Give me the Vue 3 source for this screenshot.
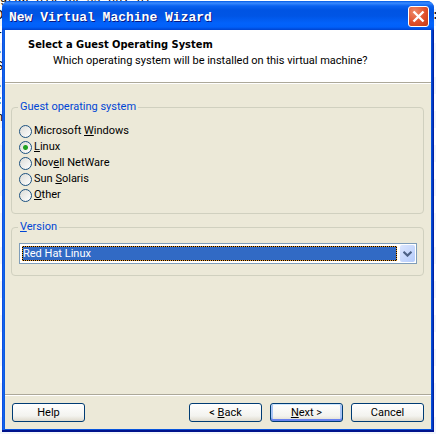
<template>
  <div class="desktop">
    <div class="backdrop" aria-hidden="true">
      <span class="behind-top">grap nix ok ss nn. nl</span>
      <span v-for="(row, i) in behindRows" :key="i" class="behind-row">
        <span>{{ row.left }}</span><span>{{ row.right }}</span>
      </span>
    </div>

    <form class="window" @submit.prevent>
      <header class="titlebar">
        <h1 class="title">New Virtual Machine Wizard</h1>
        <button type="button" class="close" aria-label="Close">
          <svg viewBox="0 0 19 19" width="19" height="19">
            <path d="M4.5 4.5 L14.5 14.5 M14.5 4.5 L4.5 14.5" stroke="#fff" stroke-width="2.4" />
          </svg>
        </button>
      </header>

      <div class="client">
        <div class="banner">
          <h2>Select a Guest Operating System</h2>
          <p>Which operating system will be installed on this virtual machine?</p>
        </div>

        <div class="page">
          <fieldset class="group systems">
            <legend>Guest operating system</legend>
            <label v-for="os in systems" :key="os.value" class="option">
              <input v-model="guest" type="radio" name="guest" :value="os.value" />
              <span>{{ os.before }}<u>{{ os.key }}</u>{{ os.after }}</span>
            </label>
          </fieldset>

          <fieldset class="group">
            <legend><label for="version"><u>V</u>ersion</label></legend>
            <div class="combo">
              <select id="version" v-model="version">
                <option>Red Hat Linux</option>
                <option>Ubuntu</option>
                <option>Other Linux</option>
              </select>
              <span class="arrow">
                <svg viewBox="0 0 9 6" width="9" height="6">
                  <path d="M0.5 0.8 L4.5 4.6 L8.5 0.8" fill="none" stroke="#4d6185" stroke-width="2.2" />
                </svg>
              </span>
            </div>
          </fieldset>
        </div>

        <footer class="actions">
          <button type="button" class="btn help">Help</button>
          <button type="button" class="btn">&lt; <u>B</u>ack</button>
          <button type="submit" class="btn default"><u>N</u>ext &gt;</button>
          <button type="button" class="btn">Cancel</button>
        </footer>
      </div>
    </form>
  </div>
</template>

<script setup>
import { ref } from 'vue';

const systems = [
  { value: 'windows', before: 'Microsoft ', key: 'W', after: 'indows' },
  { value: 'linux', before: '', key: 'L', after: 'inux' },
  { value: 'netware', before: 'Nov', key: 'e', after: 'll NetWare' },
  { value: 'solaris', before: 'Sun ', key: 'S', after: 'olaris' },
  { value: 'other', before: '', key: 'O', after: 'ther' }
];

const behindRows = [
  { left: 'D', right: ':' },
  { left: '-' },
  { left: '.' },
  { left: 'S' },
  { left: '.' },
  { left: ':' },
  { left: 'n' }
];

const guest = ref('linux');
const version = ref('Red Hat Linux');
</script>

<style>
body {
  margin: 0;
  background: #fff;
}
</style>

<style scoped>
.desktop {
  position: relative;
  box-sizing: border-box;
  height: 100vh;
  padding: 1px 2px 2px;
  overflow: hidden;
  font-family: Roboto, Tahoma, "Liberation Sans", sans-serif;
  font-size: 11px;
  line-height: 14px;
  color: #000;
}

.backdrop {
  position: absolute;
  inset: 0;
  overflow: hidden;
  background: repeating-linear-gradient(180deg, #fff 0, #fff 9px, #f3f6fb 9px, #f3f6fb 26px, #fff 26px, #fff 34px);
  font-family: "Liberation Mono", monospace;
  font-size: 12px;
  line-height: 17px;
}

.behind-top {
  display: block;
  margin-top: -9px;
  white-space: nowrap;
}

.behind-row {
  display: flex;
  justify-content: space-between;
  margin: 0 -3px 0 -4px;
}

.window {
  position: relative;
  box-sizing: border-box;
  display: flex;
  flex-direction: column;
  height: 100%;
  margin: 0;
  padding: 0 3px 3px;
  border-radius: 7px 7px 0 0;
  background: linear-gradient(90deg, #0831d9 0, #166aee 1px, #0855dd 3px, #0855dd calc(100% - 3px), #0148d8 calc(100% - 2px), #001590 100%);
  box-shadow: inset 0 -2px #00138c;
}

.titlebar {
  display: flex;
  align-items: center;
  justify-content: space-between;
  flex: none;
  box-sizing: border-box;
  height: 29px;
  margin: 0 -3px;
  padding: 2px 5px 0 7px;
  border-radius: 7px 7px 0 0;
  background: linear-gradient(180deg, #0058e6 0, #3a8bff 2px, #0a62f0 5px, #0054e3 9px, #0055e5 15px, #0262fb 22px, #0060fa 26px, #0043cf 29px);
}

.title {
  margin: 0;
  padding-top: 2px;
  font-family: "Liberation Mono", monospace;
  font-size: 13px;
  font-weight: bold;
  line-height: 18px;
  color: #fff;
  text-shadow: 1px 1px #0a1883;
  white-space: nowrap;
}

.close {
  box-sizing: border-box;
  width: 21px;
  height: 21px;
  padding: 0;
  border: 1px solid #fff;
  border-radius: 3px;
  background: radial-gradient(circle at 30% 25%, #ee8a68, #e0502c 55%, #c23a14);
}

.close svg {
  display: block;
}

.client {
  display: flex;
  flex: 1;
  flex-direction: column;
  background: #ece9d8;
}

.banner {
  box-sizing: border-box;
  height: 53px;
  padding: 8px 23px 0;
  border-bottom: 1px solid #aca899;
  background: #fff;
  box-shadow: 0 1px #fff;
}

.banner h2 {
  margin: 0;
  font-family: "DejaVu Sans Condensed", Tahoma, sans-serif;
  font-size: 11px;
  line-height: 14px;
}

.banner p {
  margin: 2px 0 0 25px;
  white-space: nowrap;
}

.page {
  flex: 1;
  padding: 17px 7px 0 6px;
}

.group {
  min-width: 0;
  margin: 0 0 6px;
  padding: 9px 6px 11px 7px;
  border: 1px solid #d0d0bf;
  border-radius: 4px;
}

.group legend {
  margin-left: -1px;
  padding: 0 2px;
  color: #0046d5;
}

.systems {
  padding: 9px 7px 10px;
}

.option {
  display: flex;
  align-items: center;
  height: 16px;
}

.option input {
  appearance: none;
  box-sizing: border-box;
  width: 13px;
  height: 13px;
  margin: 0 2px 0 0;
  border: 1px solid #1c5180;
  border-radius: 50%;
  background: linear-gradient(135deg, #dcdcd7, #fff);
}

.option input:checked {
  background: radial-gradient(circle, #21a121 0, #21a121 2px, transparent 3px), linear-gradient(135deg, #dcdcd7, #fff);
}

.combo {
  position: relative;
  box-sizing: border-box;
  display: flex;
  height: 21px;
  padding: 2px 1px 2px 2px;
  border: 1px solid #7f9db9;
  background: #fff;
}

.combo select {
  appearance: none;
  flex: 1;
  min-width: 0;
  height: 15px;
  margin: 0 3px 0 0;
  padding: 0;
  border: 1px dotted #e89a30;
  border-radius: 0;
  outline: none;
  background: linear-gradient(#316ac5, #316ac5) padding-box, linear-gradient(#000, #000) border-box;
  color: #fff;
  font: inherit;
  line-height: 13px;
}

.arrow {
  display: flex;
  align-items: center;
  justify-content: center;
  width: 15px;
  height: 17px;
  margin-top: -1px;
  border-radius: 2px;
  background: linear-gradient(135deg, #dce6fe, #b4cbfb);
  pointer-events: none;
}

.actions {
  display: flex;
  gap: 8px;
  padding: 8px 7px 7px;
  border-top: 1px solid #aca899;
  box-shadow: inset 0 1px #fff;
}

.btn {
  box-sizing: border-box;
  width: 73px;
  height: 19px;
  padding: 0;
  border: 1px solid #003c74;
  border-radius: 3px;
  background: linear-gradient(180deg, #fff 0, #f3f3ef 70%, #dfdacd 100%);
  color: #000;
  font: inherit;
}

.help {
  margin-right: auto;
}

.default {
  box-shadow: inset 0 1px #cee7ff, inset 0 -2px #6982ee, inset 2px 0 #a8c4f5, inset -2px 0 #a8c4f5;
}
</style>
